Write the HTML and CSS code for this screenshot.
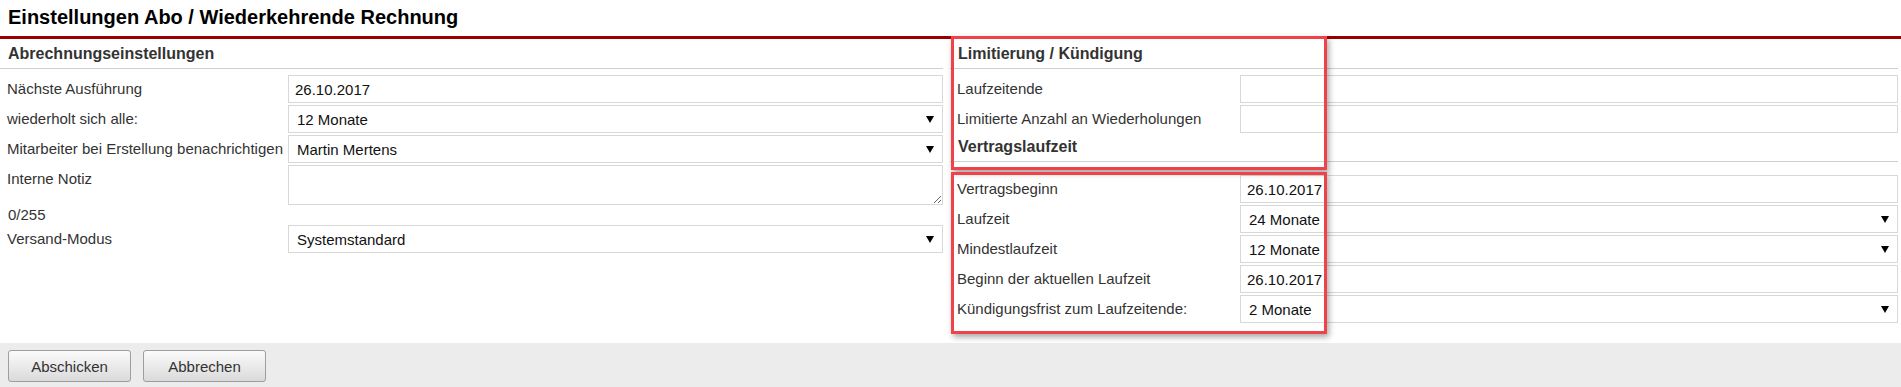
FILE: index.html
```html
<!DOCTYPE html>
<html lang="de">
<head>
<meta charset="utf-8">
<title>Einstellungen Abo / Wiederkehrende Rechnung</title>
<link rel="stylesheet" href="styles.css">
</head>
<body>
<div class="page">
  <h1 class="title">Einstellungen Abo / Wiederkehrende Rechnung</h1>
  <div class="main">
    <section class="col col-left">
      <h2 class="heading">Abrechnungseinstellungen</h2>
      <div class="rows">
        <div class="row"><label class="lbl">Nächste Ausführung</label><input class="field" type="text" value="26.10.2017"></div>
        <div class="row"><label class="lbl">wiederholt sich alle:</label><div class="sel"><select class="field selfield"><option>12 Monate</option></select></div></div>
        <div class="row"><label class="lbl">Mitarbeiter bei Erstellung benachrichtigen</label><div class="sel"><select class="field selfield"><option>Martin Mertens</option></select></div></div>
        <div class="row"><label class="lbl">Interne Notiz</label><textarea class="field area"></textarea></div>
        <div class="counter">0/255</div>
        <div class="row"><label class="lbl">Versand-Modus</label><div class="sel"><select class="field selfield"><option>Systemstandard</option></select></div></div>
      </div>
    </section>
    <section class="col col-right">
      <h2 class="heading">Limitierung / Kündigung</h2>
      <div class="rows">
        <div class="row row-r"><label class="lbl">Laufzeitende</label><input class="field" type="text" value=""></div>
        <div class="row row-r"><label class="lbl">Limitierte Anzahl an Wiederholungen</label><input class="field" type="text" value=""></div>
      </div>
      <h2 class="heading heading-2">Vertragslaufzeit</h2>
      <div class="rows rows-2">
        <div class="row row-r"><label class="lbl">Vertragsbeginn</label><input class="field" type="text" value="26.10.2017"></div>
        <div class="row row-r"><label class="lbl">Laufzeit</label><div class="sel"><select class="field selfield"><option>24 Monate</option></select></div></div>
        <div class="row row-r"><label class="lbl">Mindestlaufzeit</label><div class="sel"><select class="field selfield"><option>12 Monate</option></select></div></div>
        <div class="row row-r"><label class="lbl">Beginn der aktuellen Laufzeit</label><input class="field" type="text" value="26.10.2017"></div>
        <div class="row row-r"><label class="lbl">Kündigungsfrist zum Laufzeitende:</label><div class="sel"><select class="field selfield"><option>2 Monate</option></select></div></div>
      </div>
    </section>
  </div>
  <div class="footer">
    <button class="btn" type="button">Abschicken</button>
    <button class="btn" type="button">Abbrechen</button>
  </div>
  <div class="mark mark-1"></div>
  <div class="mark mark-2"></div>
</div>
</body>
</html>
```
FILE: styles.css
```css
* { box-sizing: border-box; }
html, body { margin: 0; padding: 0; background: #fff; }
body {
  font-family: "Liberation Sans", Arial, sans-serif;
  font-size: 15px;
  color: #333;
}
.page { position: relative; width: 1901px; height: 387px; overflow: hidden; }
.title {
  margin: 0;
  height: 39px;
  padding: 0 0 0 8px;
  font-size: 20px;
  font-weight: bold;
  line-height: 34px;
  color: #000;
  border-bottom: 3px solid #9b0000;
}
.main {
  display: grid;
  grid-template-columns: 943px 1fr;
  column-gap: 7px;
  padding-right: 3px;
  height: 304px;
}
.heading {
  margin: 0;
  height: 30px;
  padding-left: 8px;
  font-size: 16px;
  font-weight: bold;
  line-height: 30px;
  color: #333;
  border-bottom: 1px solid #d0d0d0;
}
.heading-2 { height: 29px; line-height: 28px; }
.rows { display: flex; flex-direction: column; gap: 2px; padding-top: 6px; }
.rows-2 { padding-top: 13px; }
.row { display: grid; grid-template-columns: 288px 1fr; align-items: start; }
.row-r { grid-template-columns: 290px 1fr; }
.lbl { padding-left: 7px; line-height: 27px; color: #333; white-space: nowrap; }
.field {
  display: block;
  width: 100%;
  height: 28px;
  margin: 0;
  border: 1px solid #d8d8d8;
  border-radius: 0;
  background: #fff;
  font-family: "Liberation Sans", Arial, sans-serif;
  font-size: 15px;
  color: #111;
  padding: 0 6px;
  outline: none;
}
.sel { position: relative; }
.selfield { appearance: none; -webkit-appearance: none; padding: 0 24px 0 8px; }
.sel::after {
  content: "";
  position: absolute;
  right: 9px;
  top: 11px;
  border-left: 4px solid transparent;
  border-right: 4px solid transparent;
  border-top: 7px solid #000;
  pointer-events: none;
}
.area { height: 40px; resize: both; padding: 4px 6px; }
.counter { padding-left: 8px; line-height: 16px; height: 16px; margin-top: 0; }
.footer {
  height: 44px;
  background: #ececec;
  display: flex;
  gap: 12px;
  padding: 7px 0 0 8px;
}
.btn {
  width: 123px;
  height: 32px;
  border: 1px solid #9e9e9e;
  border-radius: 3px;
  background: linear-gradient(#fbfbfb, #dadada);
  font-family: "Liberation Sans", Arial, sans-serif;
  font-size: 15px;
  color: #333;
  padding: 0;
}
.mark {
  position: absolute;
  left: 951px;
  width: 376px;
  border: 3px solid #ef4349;
  box-shadow: 2px 3px 6px rgba(0, 0, 0, 0.35);
  pointer-events: none;
}
.mark-1 { top: 36px; height: 134px; }
.mark-2 { top: 172px; height: 162px; }
```
